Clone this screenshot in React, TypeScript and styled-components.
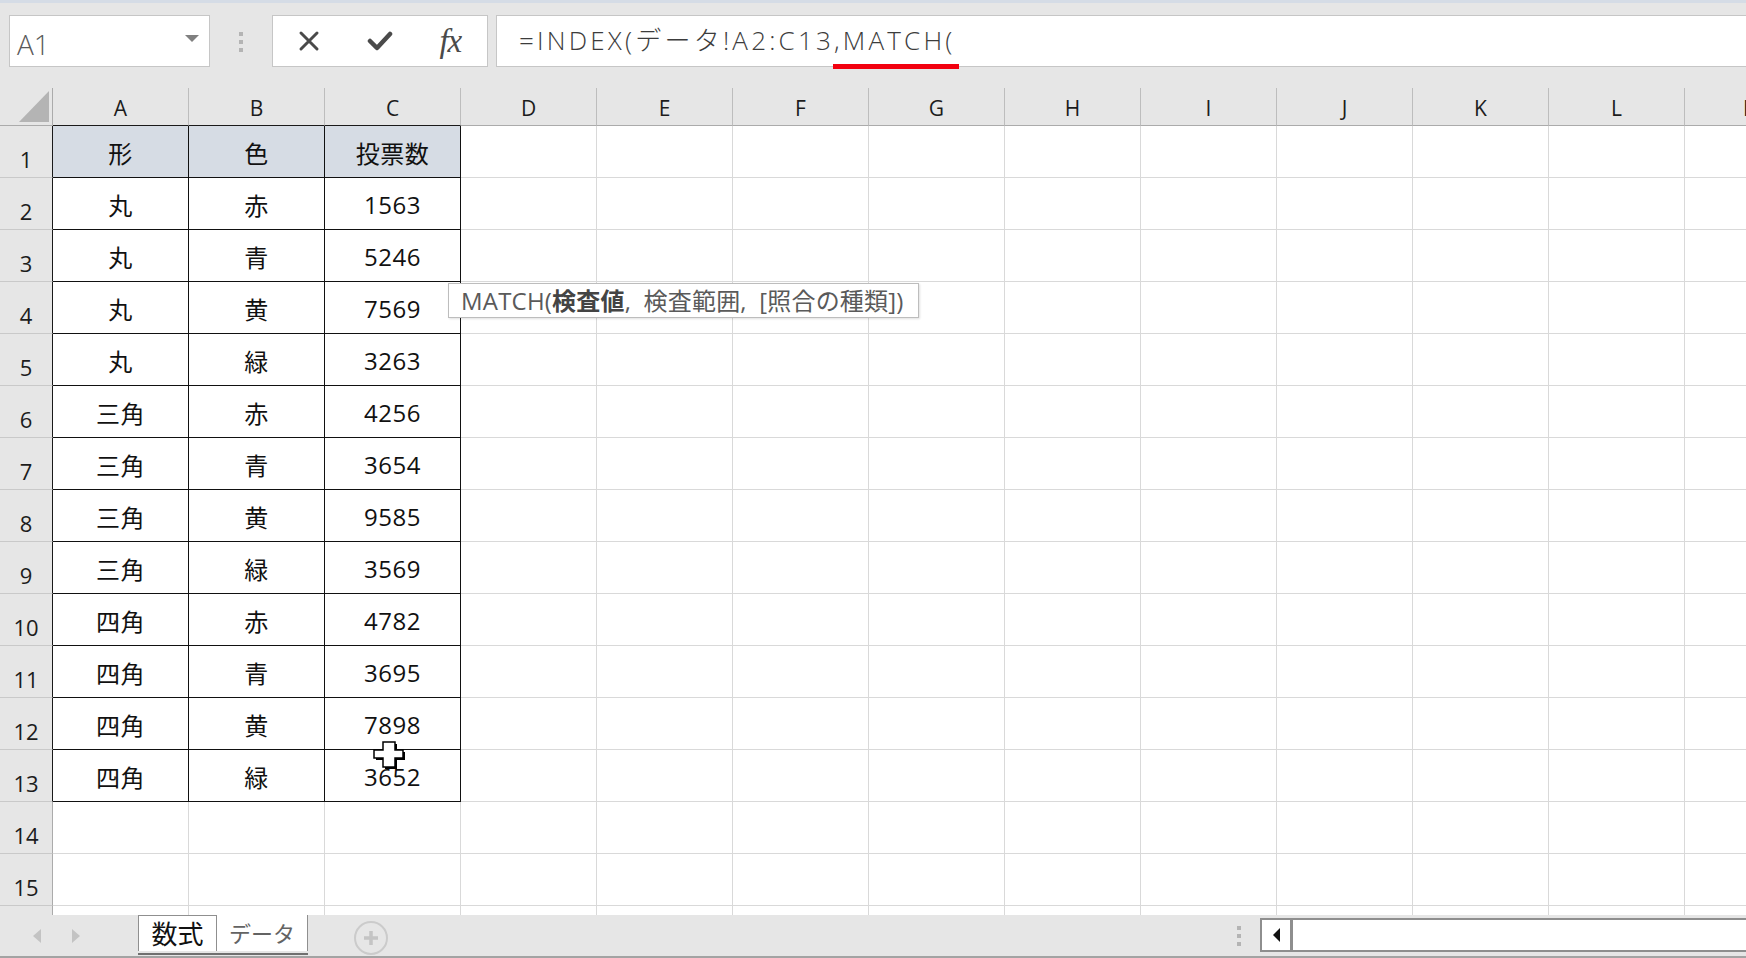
import React from "react";
import styled, { createGlobalStyle } from "styled-components";

const UI_FONT = `"Open Sans", "Noto Sans CJK JP", sans-serif`;

const GlobalStyle = createGlobalStyle`
  html, body {
    margin: 0;
    padding: 0;
    background: #e6e6e6;
    overflow: hidden;
  }
  #root {
    width: 1746px;
    height: 958px;
  }
`;

const Window = styled.div`
  width: 1746px;
  height: 958px;
  display: flex;
  flex-direction: column;
  background: #e6e6e6;
  font-family: ${UI_FONT};
  overflow: hidden;
`;

const TopStrip = styled.div`
  flex: none;
  height: 3px;
  background: #d5dce6;
`;

/* ---------- formula bar ---------- */

const FormulaBar = styled.div`
  flex: none;
  height: 85px;
  box-sizing: border-box;
  padding: 12px 0 0 9px;
  display: flex;
  align-items: flex-start;
`;

const NameBox = styled.div`
  flex: none;
  width: 201px;
  height: 52px;
  box-sizing: border-box;
  border: 1px solid #c6c6c6;
  background: #fff;
  display: flex;
  align-items: center;
  justify-content: space-between;
  padding: 5px 10px 0 7px;
  color: #5a5a5a;
  font-size: 28px;
  font-weight: 300;
`;

const Caret = styled.span`
  width: 0;
  height: 0;
  border-left: 7px solid transparent;
  border-right: 7px solid transparent;
  border-top: 7px solid #808080;
  margin-top: -10px;
`;

const Grip = styled.div<{ $gap: number }>`
  flex: none;
  display: flex;
  flex-direction: column;
  gap: ${(p) => p.$gap}px;
  & > span {
    width: 4px;
    height: 4px;
    background: #b4b4b4;
  }
`;

const FormulaGrip = styled(Grip)`
  margin: 17px 29px 0 29px;
`;

const FxBox = styled.div`
  flex: none;
  width: 216px;
  height: 52px;
  box-sizing: border-box;
  border: 1px solid #c6c6c6;
  background: #fff;
  display: flex;
`;

const IconSlot = styled.div`
  width: 72px;
  display: flex;
  align-items: center;
  justify-content: center;
  color: #4a4a4a;
`;

const FxLabel = styled.span`
  font-family: "Liberation Serif", "DejaVu Serif", serif;
  font-style: italic;
  font-size: 33px;
  color: #4a4a4a;
  margin-left: -2px;
  margin-top: 1px;
  letter-spacing: -1px;
`;

const FormulaInput = styled.div`
  position: relative;
  flex: 1;
  margin-left: 8px;
  height: 52px;
  box-sizing: border-box;
  border: 1px solid #c6c6c6;
  border-right: none;
  background: #fff;
  display: flex;
  align-items: center;
  padding: 0 0 5px 22px;
  font-family: "Open Sans", "Noto Sans CJK JP", sans-serif;
  font-weight: 300;
  font-size: 26px;
  letter-spacing: 3.2px;
  color: #3c3c3c;
  white-space: nowrap;
`;

const RedMark = styled.span`
  position: absolute;
  left: 336px;
  top: 48px;
  width: 126px;
  height: 5px;
  background: #f2000f;
`;

/* ---------- sheet grid ---------- */

const Sheet = styled.div`
  position: relative;
  flex: none;
  height: 827px;
  overflow: hidden;
  background: #fff;
  display: grid;
  grid-template-columns: 53px repeat(13, 136px);
  grid-template-rows: 38px repeat(16, 52px);
`;

const Corner = styled.div`
  box-sizing: border-box;
  background: #e6e6e6;
  border-right: 1px solid #ababab;
  border-bottom: 1px solid #ababab;
  display: flex;
  align-items: flex-end;
  justify-content: flex-end;
  padding: 0 3px 3px 0;
`;

const ColHeader = styled.div<{ $edge?: boolean }>`
  box-sizing: border-box;
  background: #e6e6e6;
  border-right: 1px solid #bdbdbd;
  border-bottom: 1px solid ${(p) => (p.$edge ? "#1a1a1a" : "#ababab")};
  display: flex;
  align-items: center;
  justify-content: center;
  padding-top: 3px;
  font-size: 21px;
  color: #1c1c1c;
  white-space: nowrap;
`;

const RowHeader = styled.div<{ $edge?: boolean }>`
  box-sizing: border-box;
  background: #e6e6e6;
  border-right: 1px solid ${(p) => (p.$edge ? "#1a1a1a" : "#ababab")};
  border-bottom: 1px solid #c9c9c9;
  display: flex;
  align-items: flex-end;
  justify-content: center;
  padding-bottom: 3px;
  font-size: 22px;
  line-height: 30px;
  color: #1c1c1c;
`;

const Cell = styled.div<{ $boxed?: boolean; $head?: boolean }>`
  box-sizing: border-box;
  background: ${(p) => (p.$head ? "#d6dce4" : "#fff")};
  border-right: 1px solid ${(p) => (p.$boxed ? "#111" : "#d9d9d9")};
  border-bottom: 1px solid ${(p) => (p.$boxed ? "#111" : "#d9d9d9")};
  display: flex;
  align-items: center;
  justify-content: center;
  padding-top: 1px;
  font-size: 24px;
  letter-spacing: 0.5px;
  color: #111;
`;

const Tooltip = styled.div`
  position: absolute;
  left: 448px;
  top: 195px;
  height: 35px;
  box-sizing: border-box;
  padding: 0 14px 2px 12px;
  border: 1px solid #bdbdbd;
  background: #fff;
  box-shadow: 1px 1px 2px rgba(0, 0, 0, 0.12);
  display: flex;
  align-items: center;
  font-size: 24px;
  letter-spacing: 0.2px;
  word-spacing: 6px;
  color: #5a5a5a;
  white-space: pre;
  & b {
    color: #444;
    font-weight: 700;
  }
`;

const Pointer = styled.svg`
  position: absolute;
  left: 372px;
  top: 652px;
`;

/* ---------- sheet tabs ---------- */

const TabBar = styled.div`
  flex: none;
  height: 43px;
  box-sizing: border-box;
  border-bottom: 2px solid #a3a3a3;
  display: flex;
  align-items: flex-start;
`;

const NavArrows = styled.div`
  flex: none;
  width: 138px;
  height: 41px;
  display: flex;
  align-items: center;
  gap: 31px;
  padding-left: 33px;
  box-sizing: border-box;
`;

const Arrow = styled.span<{ $dir: "left" | "right" }>`
  width: 0;
  height: 0;
  border-top: 7px solid transparent;
  border-bottom: 7px solid transparent;
  ${(p) =>
    p.$dir === "left"
      ? "border-right: 8px solid #c3c3c3;"
      : "border-left: 8px solid #c3c3c3;"}
`;

const Tabs = styled.div`
  flex: none;
  display: flex;
  height: 38px;
  border-bottom: 2px solid #707070;
`;

const Tab = styled.div<{ $active?: boolean }>`
  box-sizing: border-box;
  height: 36px;
  background: #fff;
  display: flex;
  align-items: center;
  justify-content: center;
  padding-bottom: 2px;
  font-family: "Noto Sans CJK JP", sans-serif;
  white-space: nowrap;
  border-right: 1px solid #8f8f8f;
  ${(p) =>
    p.$active
      ? "width: 91px; color: #636363; font-size: 22px;"
      : "width: 79px; color: #111; font-size: 26px; border-left: 1px solid #8f8f8f; border-top: 1px solid #8f8f8f;"}
`;

const AddSheet = styled.div`
  flex: none;
  width: 30px;
  height: 30px;
  margin: 6px 0 0 46px;
  border: 2px solid #cbcbcb;
  border-radius: 50%;
  display: flex;
  align-items: center;
  justify-content: center;
  color: #c4c4c4;
`;

const ScrollArea = styled.div`
  margin-left: auto;
  display: flex;
  align-items: flex-start;
  height: 41px;
`;

const ScrollGrip = styled(Grip)`
  margin: 0 19px 0 0;
  align-self: center;
`;

const ScrollBox = styled.div`
  width: 486px;
  height: 34px;
  margin-top: 3px;
  box-sizing: border-box;
  border: 2px solid #8e8e8e;
  border-right: none;
  display: flex;
  background: #fff;
`;

const ScrollButton = styled.div`
  width: 31px;
  box-sizing: border-box;
  border-right: 3px solid #8e8e8e;
  display: flex;
  align-items: center;
  justify-content: center;
  &::before {
    content: "";
    width: 0;
    height: 0;
    border-top: 7px solid transparent;
    border-bottom: 7px solid transparent;
    border-right: 7px solid #111;
  }
`;

/* ---------- data ---------- */

const columns = ["A", "B", "C", "D", "E", "F", "G", "H", "I", "J", "K", "L", "M"];

const rows: [string, string, string][] = [
  ["形", "色", "投票数"],
  ["丸", "赤", "1563"],
  ["丸", "青", "5246"],
  ["丸", "黄", "7569"],
  ["丸", "緑", "3263"],
  ["三角", "赤", "4256"],
  ["三角", "青", "3654"],
  ["三角", "黄", "9585"],
  ["三角", "緑", "3569"],
  ["四角", "赤", "4782"],
  ["四角", "青", "3695"],
  ["四角", "黄", "7898"],
  ["四角", "緑", "3652"],
];

const ROW_COUNT = 16;

function CloseIcon() {
  return (
    <svg width="22" height="22" viewBox="0 0 22 22">
      <path d="M3 3 L19 19 M19 3 L3 19" stroke="currentColor" strokeWidth="3" strokeLinecap="round" fill="none" />
    </svg>
  );
}

function CheckIcon() {
  return (
    <svg width="26" height="22" viewBox="0 0 26 22">
      <path d="M3 11 L10 18 L23 4" stroke="currentColor" strokeWidth="4.5" strokeLinecap="round" strokeLinejoin="round" fill="none" />
    </svg>
  );
}

function SelectTriangle() {
  return (
    <svg width="30" height="31" viewBox="0 0 30 31">
      <polygon points="0,31 30,0 30,31" fill="#b4b4b4" />
    </svg>
  );
}

function CellPointer() {
  const shape = "11,2 23,2 23,10 31,10 31,18 23,18 23,27 11,27 11,18 2,18 2,10 11,10";
  return (
    <Pointer width="36" height="32" viewBox="0 0 36 32">
      <polygon points={shape} fill="#000" transform="translate(2,2)" />
      <polygon points={shape} fill="#fff" stroke="#000" strokeWidth="1.5" />
    </Pointer>
  );
}

function PlusIcon() {
  return (
    <svg width="16" height="16" viewBox="0 0 16 16">
      <path d="M8 1 V15 M1 8 H15" stroke="currentColor" strokeWidth="3.5" />
    </svg>
  );
}

export default function App() {
  const cells: React.ReactNode[] = [];

  cells.push(
    <Corner key="corner">
      <SelectTriangle />
    </Corner>
  );
  columns.forEach((c, i) =>
    cells.push(
      <ColHeader key={`h-${c}`} $edge={i < 3}>
        {c}
      </ColHeader>
    )
  );

  for (let r = 0; r < ROW_COUNT; r++) {
    const data = rows[r];
    cells.push(
      <RowHeader key={`r-${r}`} $edge={r < rows.length}>
        {r + 1}
      </RowHeader>
    );
    columns.forEach((c, ci) => {
      const value = data && ci < 3 ? data[ci] : "";
      const boxed = !!data && ci < 3;
      cells.push(
        <Cell key={`${c}${r + 1}`} $boxed={boxed} $head={boxed && r === 0}>
          {value}
        </Cell>
      );
    });
  }

  return (
    <>
      <GlobalStyle />
      <Window>
        <TopStrip />
        <FormulaBar>
          <NameBox>
            <span>A1</span>
            <Caret />
          </NameBox>
          <FormulaGrip $gap={4}>
            <span />
            <span />
            <span />
          </FormulaGrip>
          <FxBox>
            <IconSlot>
              <CloseIcon />
            </IconSlot>
            <IconSlot>
              <CheckIcon />
            </IconSlot>
            <IconSlot>
              <FxLabel>fx</FxLabel>
            </IconSlot>
          </FxBox>
          <FormulaInput>
            =INDEX(データ!A2:C13,MATCH(
            <RedMark />
          </FormulaInput>
        </FormulaBar>

        <Sheet>
          {cells}
          <Tooltip>
            <span>
              MATCH(<b>検査値</b>, 検査範囲, [照合の種類])
            </span>
          </Tooltip>
          <CellPointer />
        </Sheet>

        <TabBar>
          <NavArrows>
            <Arrow $dir="left" />
            <Arrow $dir="right" />
          </NavArrows>
          <Tabs>
            <Tab>数式</Tab>
            <Tab $active>データ</Tab>
          </Tabs>
          <AddSheet>
            <PlusIcon />
          </AddSheet>
          <ScrollArea>
            <ScrollGrip $gap={4}>
              <span />
              <span />
              <span />
            </ScrollGrip>
            <ScrollBox>
              <ScrollButton />
            </ScrollBox>
          </ScrollArea>
        </TabBar>
      </Window>
    </>
  );
}
